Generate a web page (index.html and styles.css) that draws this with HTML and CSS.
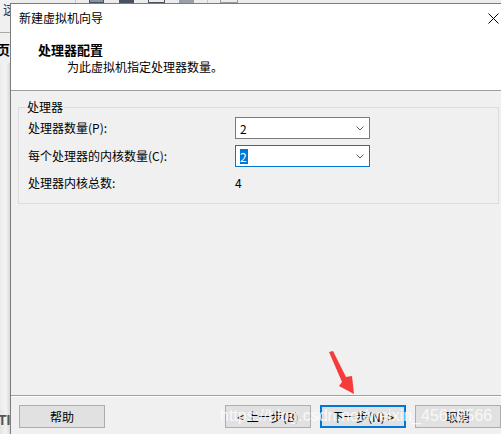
FILE: index.html
```html
<!DOCTYPE html>
<html lang="zh-CN">
<head>
<meta charset="utf-8">
<title>新建虚拟机向导</title>
<link rel="stylesheet" href="styles.css">
</head>
<body>
<div class="screen">
  <aside class="bg-strip">
    <div class="bg-top"><span class="bg-glyph">这</span></div>
    <div class="bg-tab"><span class="bg-bold">页</span></div>
    <div class="bg-fill"></div>
    <div class="bg-bottom"><span class="bg-bold-b">TI</span></div>
  </aside>
  <div class="main">
    <div class="bg-toolbar">
      <span class="tb-sep tb-sep-1"></span>
      <span class="tb-icon tb-i1"></span>
      <span class="tb-icon tb-i2"></span>
      <span class="tb-icon tb-i3"></span>
      <span class="tb-icon tb-i4"></span>
      <span class="tb-sep tb-sep-2"></span>
      <span class="tb-icon tb-i5"></span>
    </div>
    <section class="dialog">
      <header class="dlg-header">
        <div class="titlebar">
          <span class="title">新建虚拟机向导</span>
          <svg class="close" width="11" height="11" viewBox="0 0 11 11"><path d="M0.5 0.5 L10.5 10.5 M10.5 0.5 L0.5 10.5" stroke="#000" stroke-width="1" fill="none"/></svg>
        </div>
        <div class="page-title">处理器配置</div>
        <div class="page-sub">为此虚拟机指定处理器数量。</div>
      </header>
      <div class="dlg-body">
        <fieldset class="group">
          <legend>处理器</legend>
          <div class="grid">
            <span class="lbl">处理器数量(P):</span>
            <div class="combo"><span class="val">2</span><svg class="chev" width="8" height="5" viewBox="0 0 8 5"><path d="M0.5 0.5 L4 4 L7.5 0.5" stroke="#606060" stroke-width="1" fill="none"/></svg></div>
            <span class="lbl">每个处理器的内核数量(C):</span>
            <div class="combo combo-focus"><span class="val val-sel">2</span><svg class="chev" width="8" height="5" viewBox="0 0 8 5"><path d="M0.5 0.5 L4 4 L7.5 0.5" stroke="#606060" stroke-width="1" fill="none"/></svg></div>
            <span class="lbl lbl-row3">处理器内核总数:</span>
            <span class="total">4</span>
          </div>
        </fieldset>
      </div>
      <div class="separator"></div>
      <footer class="dlg-footer">
        <button class="btn">帮助</button>
        <div class="btn-group">
          <button class="btn">&lt; 上一步(B)</button>
          <button class="btn btn-default">下一步(N) &gt;</button>
          <button class="btn">取消</button>
        </div>
      </footer>
    </section>
  </div>
  <div class="watermark">https://blog.csdn.net/weixin_45660566</div>
  <svg class="arrow" width="30" height="46" viewBox="326 350 30 46"><polygon points="329,352 333,351 346,377 352,376 354,394 339,386 342,382" fill="#f53b3b"/></svg>
</div>
</body>
</html>
```

FILE: styles.css
```css
* { box-sizing: border-box; }
html, body { margin: 0; padding: 0; }
body {
  font-family: "Noto Sans CJK SC", "Microsoft YaHei", sans-serif;
  font-size: 12px;
  color: #000;
  background: #f0f0f0;
}
.screen {
  position: relative;
  width: 501px;
  height: 434px;
  overflow: hidden;
  display: flex;
  background: #f0f0f0;
}

/* background window strip on the left */
.bg-strip {
  width: 10px;
  flex: none;
  display: flex;
  flex-direction: column;
  overflow: hidden;
  background: #f0f0f0;
}
.bg-top {
  height: 33px;
  border-bottom: 1px solid #a8a8a8;
  overflow: hidden;
}
.bg-glyph {
  display: block;
  margin-left: 3px;
  margin-top: 1px;
  font-size: 13px;
  line-height: 15px;
  color: #2c3a55;
  white-space: nowrap;
}
.bg-tab {
  height: 30px;
  padding-top: 8px;
  overflow: hidden;
}
.bg-bold {
  display: block;
  margin-left: -4px;
  font-size: 14px;
  font-weight: bold;
  line-height: 16px;
  white-space: nowrap;
}
.bg-fill {
  flex: 1;
  background: linear-gradient(to right, #ececec 0%, #f4f4f4 60%, #d8d8d8 100%);
}
.bg-bottom {
  height: 24px;
  padding-top: 2px;
  background: linear-gradient(to right, #e4e4e4 0%, #f2f2f2 60%, #d8d8d8 100%);
  overflow: hidden;
}
.bg-bold-b {
  display: block;
  font-family: "Liberation Sans", sans-serif;
  font-size: 14px;
  font-weight: bold;
  line-height: 16px;
  color: #555;
  margin-left: -2px;
  white-space: nowrap;
}

.main {
  flex: 1;
  min-width: 0;
  display: flex;
  flex-direction: column;
}
.bg-toolbar {
  height: 3px;
  flex: none;
  display: flex;
  align-items: flex-end;
  background: #ececec;
  overflow: hidden;
}
.tb-sep { width: 1px; height: 3px; background: #c8c8c8; }
.tb-sep-1 { margin-left: 65px; }
.tb-icon { height: 3px; border: 1px solid #4a5260; border-top: none; }
.tb-i1 { margin-left: 13px; width: 15px; background: #8a93a0; }
.tb-i2 { margin-left: 15px; width: 15px; background: #4a5260; }
.tb-i3 { margin-left: 14px; width: 17px; background: transparent; }
.tb-i4 { margin-left: 14px; width: 15px; background: #9aa0aa; border-color: #9aa0aa; }
.tb-sep-2 { margin-left: 13px; }
.tb-i5 { margin-left: 12px; width: 18px; background: transparent; border-color: #9a9a9a; }

/* dialog */
.dialog {
  flex: 1;
  width: 496px;
  flex-shrink: 0;
  align-self: flex-start;
  display: flex;
  flex-direction: column;
  border-left: 1px solid #7c7c7c;
  border-top: 1px solid #7c7c7c;
  background: #f0f0f0;
}
.dlg-header {
  height: 87px;
  flex: none;
  background: #fff;
  border-bottom: 1px solid #a0a0a0;
}
.titlebar {
  height: 28px;
  display: flex;
  align-items: center;
  justify-content: space-between;
  padding: 0 7px 0 8px;
}
.title {
  font-size: 12px;
  line-height: 16px;
  color: #000;
}
.close { display: block; }
.page-title {
  margin-top: 9px;
  padding-left: 27px;
  font-size: 13px;
  font-weight: bold;
  line-height: 18px;
}
.page-sub {
  padding-left: 56px;
  font-size: 12px;
  line-height: 16px;
}

.dlg-body {
  flex: 1;
  padding: 0 7px;
}
.group {
  margin: 8px 0 0;
  padding: 2px 8px 8px 9px;
  border: 1px solid #dcdcdc;
  min-width: 0;
}
.group legend {
  margin-left: -2px;
  padding: 0 1px;
  font-size: 12px;
  line-height: 16px;
}
.grid {
  display: grid;
  grid-template-columns: 207px 135px;
  grid-auto-rows: 22px;
  row-gap: 6px;
  align-items: center;
}
.lbl, .total {
  font-size: 12px;
  line-height: 16px;
  white-space: nowrap;
}
.combo {
  height: 22px;
  display: flex;
  align-items: center;
  justify-content: space-between;
  padding: 0 5px 0 4px;
  background: #fff;
  border: 1px solid #7a7a7a;
}
.combo-focus { border-color: #0078d7; }
.val {
  font-size: 12px;
  line-height: 15px;
}
.val-sel {
  background: #0078d7;
  color: #fff;
  padding-right: 1px;
}
.chev { display: block; }
.grid > .lbl-row3, .grid > .total { margin-top: -2px; }

.separator {
  height: 2px;
  flex: none;
  border-top: 1px solid #a0a0a0;
  border-bottom: 1px solid #fff;
}
.dlg-footer {
  flex: none;
  display: flex;
  justify-content: space-between;
  padding: 8px 5px 6px 8px;
}
.btn-group {
  display: flex;
  gap: 9px;
}
.btn {
  width: 86px;
  height: 23px;
  padding: 0;
  font-family: "Noto Sans CJK SC", "Microsoft YaHei", sans-serif;
  font-size: 12px;
  line-height: 16px;
  color: #000;
  background: #e1e1e1;
  border: 1px solid #adadad;
  border-radius: 0;
}
.btn-default { border: 2px solid #0078d7; }

/* annotations over the screenshot */
.watermark {
  position: absolute;
  left: 220px;
  top: 407px;
  font-family: "Liberation Sans", Arial, sans-serif;
  font-size: 16px;
  line-height: 18px;
  color: rgba(255, 255, 255, 0.8);
  white-space: nowrap;
  pointer-events: none;
}
.arrow {
  position: absolute;
  left: 326px;
  top: 350px;
}
```
